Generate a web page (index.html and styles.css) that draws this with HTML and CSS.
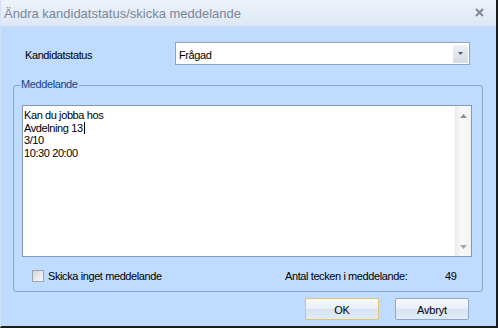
FILE: index.html
```html
<!DOCTYPE html>
<html lang="sv">
<head>
<meta charset="utf-8">
<title>Ändra kandidatstatus/skicka meddelande</title>
<link rel="stylesheet" href="styles.css">
</head>
<body>
<div class="window">
  <div class="titlebar">
    <span class="title">Ändra kandidatstatus/skicka meddelande</span>
    <svg class="close" width="9" height="9" viewBox="0 0 9 9"><path d="M1 1 L8 8 M8 1 L1 8" stroke="#7d8898" stroke-width="2" fill="none"/></svg>
  </div>
  <div class="main">
    <div class="status-row">
      <span class="label">Kandidatstatus</span>
      <div class="combo">
        <span class="combo-text">Frågad</span>
        <span class="combo-btn"><svg width="5" height="3" viewBox="0 0 5 3"><path d="M0 0 H5 L2.5 3 Z" fill="#4d5a6c"/></svg></span>
      </div>
    </div>
    <div class="group">
      <span class="legend">Meddelande</span>
      <div class="textarea">
        <div class="text">
          <div>Kan du jobba hos</div>
          <div>Avdelning 13<span class="caret"></span></div>
          <div>3/10</div>
          <div>10:30 20:00</div>
        </div>
        <div class="scroll">
          <svg width="7" height="4" viewBox="0 0 7 4"><path d="M0 4 L3.5 0 L7 4 Z" fill="#8a8f96"/></svg>
          <svg width="7" height="4" viewBox="0 0 7 4"><path d="M0 0 L3.5 4 L7 0 Z" fill="#a3a8ae"/></svg>
        </div>
      </div>
      <div class="footer">
        <span class="checkbox"></span>
        <span class="check-label">Skicka inget meddelande</span>
        <div class="count">
          <span>Antal tecken i meddelande:</span>
          <span>49</span>
        </div>
      </div>
    </div>
    <div class="buttons">
      <button class="btn default">OK</button>
      <button class="btn">Avbryt</button>
    </div>
  </div>
</div>
</body>
</html>
```

FILE: styles.css
```css
html, body {
  margin: 0;
  padding: 0;
}
body {
  width: 498px;
  height: 328px;
  overflow: hidden;
  font-family: "Liberation Sans", Arial, sans-serif;
  font-size: 11px;
  letter-spacing: -0.4px;
  color: #000;
}
.window {
  box-sizing: border-box;
  width: 498px;
  height: 328px;
  background: #bfdbff;
  border-right: 2px solid #1c1c1c;
  border-bottom: 2px solid #1c1c1c;
  border-left: 1px solid #d2e2f6;
  display: flex;
  flex-direction: column;
}
.titlebar {
  height: 26px;
  border-bottom: 1px solid #cbdaee;
  background: linear-gradient(#edf2fa, #dde7f5);
  display: flex;
  align-items: center;
  justify-content: space-between;
  padding: 0 12px 0 3px;
}
.title {
  font-size: 13px;
  letter-spacing: 0;
  color: #7a8699;
  margin-top: 1px;
}
.close {
  margin-top: -1px;
}
.main {
  padding-top: 15px;
}
.status-row {
  display: flex;
  align-items: center;
  height: 23px;
  padding-left: 24px;
}
.label {
  width: 150px;
  padding-top: 3px;
}
.combo {
  box-sizing: border-box;
  width: 295px;
  height: 23px;
  border: 1px solid #8ea3c1;
  background: #fff;
  display: flex;
  align-items: center;
  justify-content: space-between;
  padding: 2px 1px 2px 3px;
}
.combo-text {
  padding-top: 2px;
}
.combo-btn {
  width: 15px;
  height: 18px;
  background: linear-gradient(#eef1f6, #d3dbe6);
  display: flex;
  align-items: center;
  justify-content: center;
}
.group {
  position: relative;
  box-sizing: border-box;
  width: 470px;
  height: 207px;
  margin: 20px 0 0 12px;
  border: 1px solid #8aa4c8;
  border-radius: 3px;
  padding: 19px 0 0 8px;
}
.legend {
  position: absolute;
  top: -8px;
  left: 6px;
  padding: 0 1px;
  line-height: 13px;
  background: #bfdbff;
  color: #15428b;
}
.textarea {
  box-sizing: border-box;
  width: 450px;
  height: 152px;
  border: 1px solid #8397b6;
  background: #fff;
  display: flex;
}
.text {
  flex: 1;
  padding: 3px 0 0 1px;
  line-height: 12.6px;
}
.caret {
  display: inline-block;
  width: 1px;
  height: 12px;
  background: #000;
  vertical-align: -2px;
  margin-left: 1px;
}
.scroll {
  width: 16px;
  background: linear-gradient(90deg, #ececec, #f8f8f8 40%, #f3f3f3);
  display: flex;
  flex-direction: column;
  align-items: center;
  justify-content: space-between;
  padding: 8px 0 7px;
  box-sizing: border-box;
}
.footer {
  display: flex;
  align-items: center;
  padding-top: 13px;
  height: 12px;
}
.checkbox {
  box-sizing: border-box;
  width: 12px;
  height: 12px;
  margin-left: 10px;
  border: 1px solid #9da3aa;
  background: linear-gradient(135deg, #d2d5d9, #fbfbfb);
}
.check-label {
  margin-left: 4px;
}
.count {
  margin-left: auto;
  width: 197px;
  display: grid;
  grid-template-columns: 160px auto;
}
.buttons {
  display: flex;
  justify-content: flex-end;
  gap: 16px;
  margin-top: 6px;
  padding-right: 27px;
}
.btn {
  box-sizing: border-box;
  width: 74px;
  height: 22px;
  font-family: "Liberation Sans", Arial, sans-serif;
  font-size: 11px;
  letter-spacing: -0.2px;
  color: #000;
  border: 1px solid #93a8c6;
  border-radius: 2px;
  background: linear-gradient(#f7f9fd 0%, #e9eff9 48%, #d7e3f4 52%, #e2ebf8 100%);
  padding: 1px 0 0;
}
.btn.default {
  border-color: #e0c66e;
}
```
